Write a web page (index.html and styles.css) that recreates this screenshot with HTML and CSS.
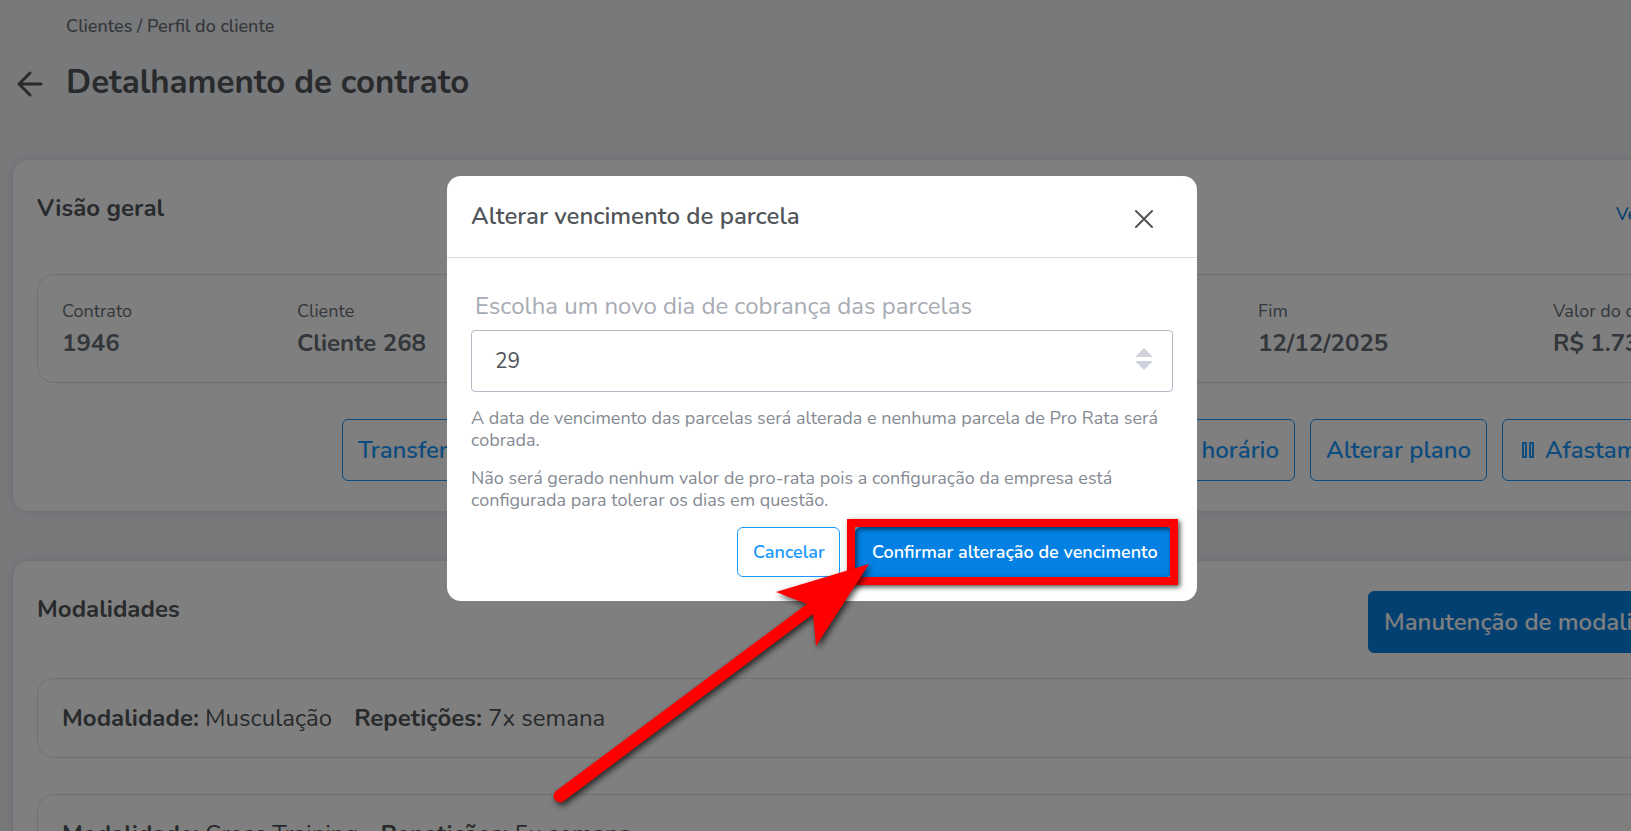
FILE: index.html
```html
<!DOCTYPE html>
<html lang="pt-BR">
<head>
	<meta charset="utf-8">
	<title>Detalhamento de contrato</title>
	<link rel="stylesheet" href="styles.css">
</head>
<body>

	<div class="page">
		<header class="page-header">
			<a href="#" class="back" aria-label="Voltar">
				<svg width="26" height="26" viewBox="0 0 26 26"><path d="M24 13H2M13 2L2 13l11 11"/></svg>
			</a>
			<div>
				<nav class="breadcrumb">Clientes / Perfil do cliente</nav>
				<h1>Detalhamento de contrato</h1>
			</div>
		</header>

		<section class="card">
			<div class="card-top">
				<h2>Visão geral</h2>
				<a href="#" class="more">Ver mais</a>
			</div>
			<dl class="summary">
				<div><dt>Contrato</dt><dd>1946</dd></div>
				<div><dt>Cliente</dt><dd>Cliente 268</dd></div>
				<div><dt>Fim</dt><dd>12/12/2025</dd></div>
				<div><dt>Valor do contrato</dt><dd>R$ 1.730,00</dd></div>
			</dl>
			<div class="actions">
				<button type="button" class="btn large">Transferir</button>
				<button type="button" class="btn large schedule">horário</button>
				<button type="button" class="btn large plan">Alterar plano</button>
				<button type="button" class="btn large leave">
					<svg width="14" height="16" viewBox="0 0 14 16"><path d="M2 1h3v14H2zM9 1h3v14H9z"/></svg>
					Afastamento
				</button>
			</div>
		</section>

		<section class="card">
			<div class="card-top">
				<h2>Modalidades</h2>
				<button type="button" class="btn large primary manage">Manutenção de modalidades</button>
			</div>
			<ul class="items">
				<li><span><b>Modalidade:</b> Musculação</span> <span><b>Repetições:</b> 7x semana</span></li>
				<li><span><b>Modalidade:</b> Cross Training</span> <span><b>Repetições:</b> 5x semana</span></li>
			</ul>
		</section>
	</div>

	<div class="overlay">
		<form class="modal" role="dialog" aria-labelledby="modalTitle">
			<div class="modal-header">
				<h3 id="modalTitle">Alterar vencimento de parcela</h3>
				<button type="button" class="close" aria-label="Fechar">
					<svg width="20" height="20" viewBox="0 0 20 20"><path d="M2 2l16 16M18 2L2 18"/></svg>
				</button>
			</div>
			<div class="modal-body">
				<label for="day">Escolha um novo dia de cobrança das parcelas</label>
				<div class="field">
					<input id="day" type="text" inputmode="numeric" value="29">
					<svg class="spin" width="18" height="22" viewBox="0 0 18 22"><path d="M9 0l8 8v1H1V8zM9 22l-8-8v-1h16v1z"/></svg>
				</div>
				<p>A data de vencimento das parcelas será alterada e nenhuma parcela de Pro Rata será cobrada.</p>
				<p>Não será gerado nenhum valor de pro-rata pois a configuração da empresa está configurada para tolerar os dias em questão.</p>
				<div class="modal-buttons">
					<button type="button" class="btn cancel">Cancelar</button>
					<div class="highlight">
						<button type="submit" class="btn primary confirm">Confirmar alteração de vencimento</button>
						<svg class="arrow" width="336" height="260" viewBox="544 554 336 260">
							<path d="M869 564L776 592L807 604L556 791A6 6 0 0 0 564 801L813 614L816 646Z"/>
						</svg>
					</div>
				</div>
			</div>
		</form>
	</div>

</body>
</html>
```

FILE: styles.css
```css
* {
	box-sizing: border-box;
}

body {
	margin: 0;
	height: 100vh;
	overflow: hidden;
	background: #f0f2f6;
	color: #515559;
	font-family: Nunito, Lato, sans-serif;
	font-size: 24px;
	line-height: 32px;
}

h1, h2, h3, p, dl, dd, ul {
	margin: 0;
	padding: 0;
}

svg {
	fill: none;
	stroke: currentColor;
	stroke-width: 2;
	stroke-linecap: round;
	stroke-linejoin: round;
}

/* the content is wider than the window and gets cut on the right */
.page {
	width: calc(100% + 110px);
	padding: 12px;
}

.page-header {
	display: flex;
	align-items: flex-end;
	gap: 23px;
	height: 93px;
	margin-bottom: 54px;
	padding-left: 5px;
}

.back {
	height: 34px;
	color: #515559;
}

.back svg {
	display: block;
	stroke-width: 3;
}

.breadcrumb {
	font-size: 18px;
	font-weight: 500;
	line-height: 28px;
	margin-bottom: 20px;
	color: #676d73;
}

h1 {
	font-size: 33px;
	line-height: 45px;
}

h2 {
	font-size: 24px;
	line-height: 36px;
}

.card {
	height: 353px;
	margin-bottom: 48px;
	padding: 30px 24px;
	background: #fff;
	border: 1px solid #e2e3ea;
	border-radius: 16px;
	box-shadow: 0 0 8px rgba(100, 100, 140, 0.1);
}

.card-top {
	display: flex;
	justify-content: space-between;
	height: 84px;
}

.more {
	width: 88px;
	padding-top: 8px;
	font-size: 18px;
	font-weight: 500;
	color: #0380e3;
	text-decoration: none;
}

.summary {
	display: grid;
	grid-template-columns: 235px 1fr 295px 126px;
	height: 109px;
	padding: 24px;
	border: 1px solid #dfdfe3;
	border-radius: 16px;
	color: #676f76;
	white-space: nowrap;
}

.summary dt {
	font-size: 18px;
	line-height: 24px;
}

.summary dd {
	font-weight: bold;
	line-height: 40px;
}

.actions {
	display: flex;
	gap: 15px;
	margin-top: 36px;
	padding-left: 305px;
}

.btn {
	flex: none;
	height: 50px;
	padding: 0 15px;
	font-family: inherit;
	font-size: 18px;
	font-weight: 600;
	color: #1998fc;
	background: transparent;
	border: 1px solid #1998fc;
	border-radius: 6px;
	white-space: nowrap;
}

.large {
	height: 62px;
	font-size: 24px;
}

.primary {
	color: #fff;
	background: #0380e3;
	border-color: #0380e3;
}

.schedule {
	flex: 1;
	text-align: right;
}

.plan {
	width: 177px;
}

.leave {
	display: flex;
	align-items: center;
	gap: 10px;
	width: 202px;
	padding-left: 18px;
}

.manage {
	width: 336px;
	text-align: left;
}

.items {
	display: grid;
	gap: 36px;
	margin-top: 3px;
	list-style: none;
}

.items li {
	display: flex;
	gap: 22px;
	height: 80px;
	padding: 23px 24px;
	border: 1px solid #dfdfe3;
	border-radius: 16px;
}

/* modal */
.overlay {
	position: fixed;
	inset: 0;
	padding: 176px 0 0 13px;
	background: rgba(0, 0, 0, 0.5);
}

.modal {
	width: 750px;
	margin: 0 auto;
	background: #fff;
	border-radius: 14px;
}

.modal-header {
	display: flex;
	justify-content: space-between;
	height: 82px;
	padding: 24px 43px 0 24px;
	border-bottom: 1px solid #dadbde;
}

.modal-header h3 {
	font-size: 24px;
	font-weight: 600;
}

.close {
	align-self: flex-start;
	padding: 9px 0 0;
	background: none;
	border: 0;
	color: #515559;
}

.close svg {
	display: block;
}

.modal-body {
	padding: 32px 24px 24px;
}

.modal-body label {
	display: block;
	padding-left: 4px;
	color: #a7abb3;
}

.field {
	position: relative;
	margin: 8px 0 15px;
}

.field input {
	display: block;
	width: 100%;
	height: 62px;
	padding: 0 23px;
	font-family: inherit;
	font-size: 21px;
	color: #515559;
	border: 1px solid #b5b8c6;
	border-radius: 4px;
}

.spin {
	position: absolute;
	top: 18px;
	right: 20px;
	fill: #d0d3de;
	stroke: none;
}

.modal-body p {
	margin-bottom: 16px;
	font-size: 18px;
	line-height: 22px;
	color: #858a93;
}

.modal-buttons {
	display: flex;
	justify-content: flex-end;
	gap: 15px;
}

.cancel {
	width: 103px;
}

.confirm {
	display: block;
	width: 318px;
	text-align: left;
	padding-left: 16px;
}

.highlight {
	position: relative;
}

/* red frame around the confirm button */
.highlight::before {
	content: "";
	position: absolute;
	inset: -8px -5px -8px -8px;
	border: 8px solid #f00;
	box-shadow: 2px 2px 5px rgba(0, 0, 0, 0.7), inset 2px 2px 5px rgba(0, 0, 0, 0.6);
}

.arrow {
	position: absolute;
	top: 27px;
	left: -311px;
	fill: #f00;
	stroke: none;
	filter: drop-shadow(2px 3px 3px rgba(0, 0, 0, 0.7));
	pointer-events: none;
}
```
